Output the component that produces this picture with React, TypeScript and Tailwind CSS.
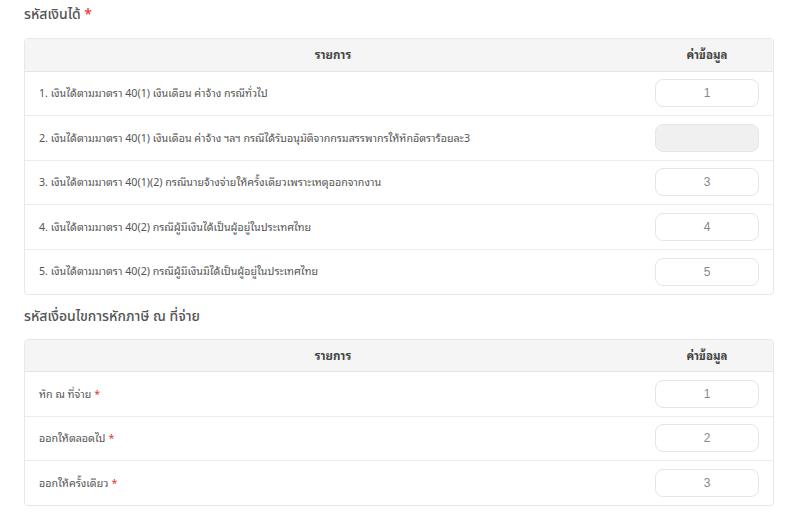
import React from 'react'

type Row = { label: string; value: string; required?: boolean; disabled?: boolean }

const incomeRows: Row[] = [
  { label: '1. เงินได้ตามมาตรา 40(1) เงินเดือน ค่าจ้าง กรณีทั่วไป', value: '1' },
  { label: '2. เงินได้ตามมาตรา 40(1) เงินเดือน ค่าจ้าง ฯลฯ กรณีได้รับอนุมัติจากกรมสรรพากรให้หักอัตราร้อยละ3', value: '', disabled: true },
  { label: '3. เงินได้ตามมาตรา 40(1)(2) กรณีนายจ้างจ่ายให้ครั้งเดียวเพราะเหตุออกจากงาน', value: '3' },
  { label: '4. เงินได้ตามมาตรา 40(2) กรณีผู้มีเงินได้เป็นผู้อยู่ในประเทศไทย', value: '4' },
  { label: '5. เงินได้ตามมาตรา 40(2) กรณีผู้มีเงินมิได้เป็นผู้อยู่ในประเทศไทย', value: '5' },
]

const conditionRows: Row[] = [
  { label: 'หัก ณ ที่จ่าย', value: '1', required: true },
  { label: 'ออกให้ตลอดไป', value: '2', required: true },
  { label: 'ออกให้ครั้งเดียว', value: '3', required: true },
]

function CodeTable({ rows }: { rows: Row[] }) {
  return (
    <div className="overflow-hidden rounded border border-[#e8e8e8]">
      <table className="w-full border-collapse text-[10.7px] text-[#555]">
        <thead>
          <tr className="border-b border-[#e4e4e4] bg-[#f5f5f5]">
            <th className="h-[32px] px-3.5 text-center text-[11.5px] font-bold text-[#444]">รายการ</th>
            <th className="h-[32px] w-[132px] px-3.5 text-center text-[11.5px] font-bold text-[#444]">ค่าข้อมูล</th>
          </tr>
        </thead>
        <tbody>
          {rows.map((row, i) => (
            <tr key={i} className={i < rows.length - 1 ? 'border-b border-[#ececec]' : ''}>
              <td className="h-[44.5px] px-3.5 text-left">
                {row.label}
                {row.required && <span className="ml-[3px] text-[#e53935]">*</span>}
              </td>
              <td className="h-[44.5px] px-3.5">
                <input
                  readOnly
                  disabled={row.disabled}
                  value={row.value}
                  className={`block h-[28px] w-full rounded-lg border border-[#e6e6e6] text-center font-['Liberation_Sans',sans-serif] text-[12px] text-[#888] outline-none ${
                    row.disabled ? 'bg-[#f0f0f0]' : 'bg-white'
                  }`}
                />
              </td>
            </tr>
          ))}
        </tbody>
      </table>
    </div>
  )
}

export default function App() {
  return (
    <div className="min-h-[528px] bg-white pl-6 pr-[21px] pt-[7px] font-['Noto_Sans_Thai_Looped','Liberation_Sans',sans-serif]">
      <h2 className="mb-[15px] font-['Noto_Sans_Thai',sans-serif] text-[14px] font-medium leading-[16px] text-[#555]">
        รหัสเงินได้ <span className="text-[#e53935]">*</span>
      </h2>
      <CodeTable rows={incomeRows} />
      <h2 className="mb-[14px] mt-[14px] font-['Noto_Sans_Thai',sans-serif] text-[14px] font-medium leading-[16px] text-[#555]">
        รหัสเงื่อนไขการหักภาษี ณ ที่จ่าย
      </h2>
      <CodeTable rows={conditionRows} />
    </div>
  )
}
